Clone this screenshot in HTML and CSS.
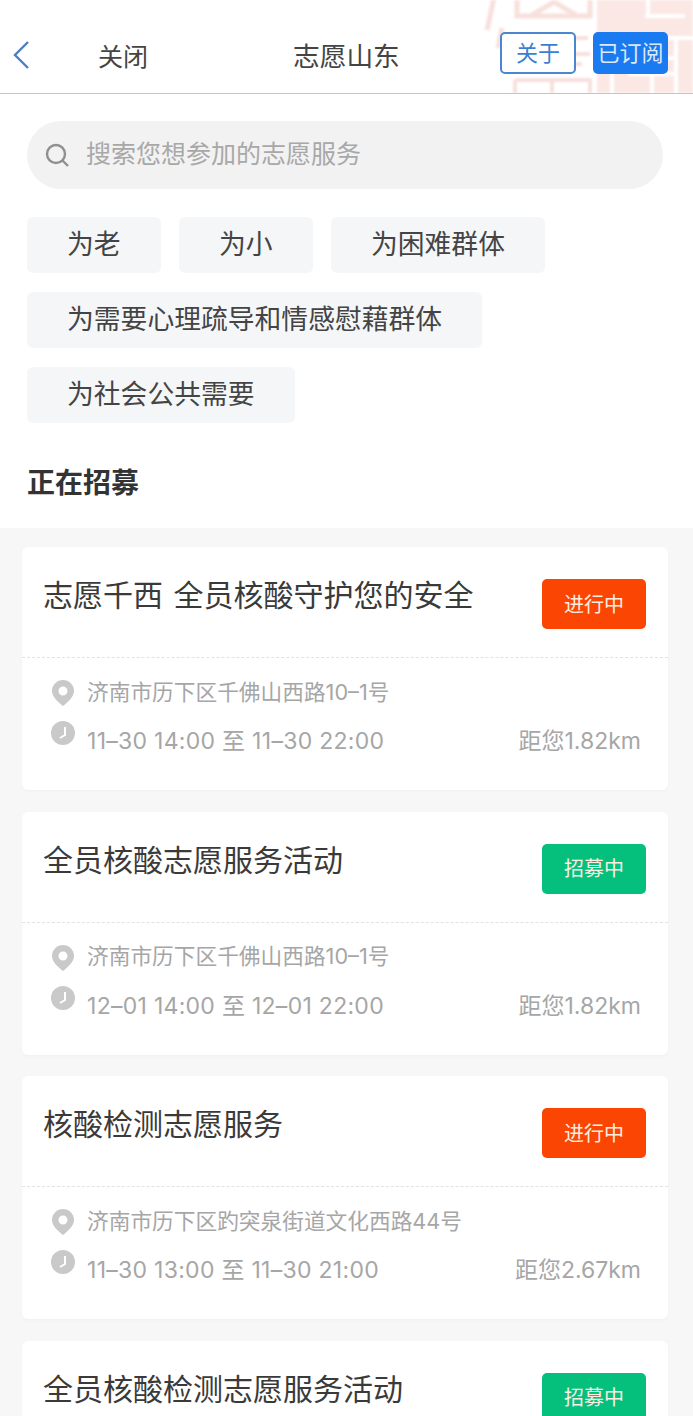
FILE: index.html
```html
<!DOCTYPE html>
<html lang="zh-CN">
<head>
    <meta charset="UTF-8">
    <meta name="viewport" content="width=device-width, initial-scale=1.0">
    <title>志愿山东</title>
    <link rel="stylesheet" href="styles.css">
</head>
<body>
    <header class="nav-bar">
        <svg class="nav-deco" width="213" height="93" viewBox="0 0 213 93" fill="none" stroke="#f8e0dc" stroke-width="5">
            <path d="M14 -2 L7 30 M22 28 L18 48 M37 -2 V16 H110 V-2 M52 15 L74 2 L96 15"/>
            <rect x="117" y="-4" width="96" height="100" fill="#fbe8e5" stroke="none"/>
            <path d="M32 38 H108 M30 54 H110 M36 64 H102 M35 80 H110 V96 M35 80 V96 M72 80 V96" stroke-width="4"/>
            <path d="M165 16 H205 M168 -2 V18 M128 38 H213 M132 38 V96 M148 58 H196 M148 74 H196 M172 42 V96 M196 38 V96" stroke="#fff" stroke-width="4"/>
        </svg>
        <svg class="back-icon" width="20" height="32" viewBox="0 0 20 32" fill="none" stroke="#4a7fc4" stroke-width="2.4">
            <path d="M17 3 L4 16 L17 29"/>
        </svg>
        <span class="nav-close">关闭</span>
        <span class="nav-title">志愿山东</span>
        <div class="nav-actions">
            <span class="btn-about">关于</span>
            <span class="btn-sub">已订阅</span>
        </div>
    </header>

    <section class="top-section">
        <div class="search-box">
            <svg width="26" height="26" viewBox="0 0 26 26" fill="none" stroke="#8f8f8f" stroke-width="2.4">
                <circle cx="12" cy="12" r="9"/>
                <path d="M18.5 18.5 L24 24"/>
            </svg>
            <span class="search-text">搜索您想参加的志愿服务</span>
        </div>
        <div class="tags-container">
            <span class="tag">为老</span>
            <span class="tag">为小</span>
            <span class="tag">为困难群体</span>
            <span class="tag">为需要心理疏导和情感慰藉群体</span>
            <span class="tag">为社会公共需要</span>
        </div>
        <h2 class="section-title">正在招募</h2>
    </section>

    <main class="card-list">
        <article class="card">
            <div class="card-head">
                <h3 class="card-title">志愿千西 全员核酸守护您的安全</h3>
                <span class="status status-going">进行中</span>
            </div>
            <div class="card-body">
                <div class="info-row info-addr">
                    <svg class="pin-icon" viewBox="0 0 24 28"><path fill-rule="evenodd" d="M12 1a11 11 0 0 1 11 11c0 6-6 11-11 15C7 23 1 18 1 12A11 11 0 0 1 12 1zm0 6.500a4.500 4.500 0 1 0 0 9 4.500 4.500 0 0 0 0-9z"/></svg>
                    <span>济南市历下区千佛山西路10–1号</span>
                </div>
                <div class="info-row info-time">
                    <svg class="clock-icon" viewBox="0 0 24 24"><circle cx="12" cy="12" r="12"/><path d="M14 6 V14 L9 17" fill="none" stroke="#fff" stroke-width="2"/></svg>
                    <span class="time-text">11–30 14:00 至 11–30 22:00</span>
                    <span class="distance">距您1.82km</span>
                </div>
            </div>
        </article>

        <article class="card">
            <div class="card-head">
                <h3 class="card-title">全员核酸志愿服务活动</h3>
                <span class="status status-open">招募中</span>
            </div>
            <div class="card-body">
                <div class="info-row info-addr">
                    <svg class="pin-icon" viewBox="0 0 24 28"><path fill-rule="evenodd" d="M12 1a11 11 0 0 1 11 11c0 6-6 11-11 15C7 23 1 18 1 12A11 11 0 0 1 12 1zm0 6.500a4.500 4.500 0 1 0 0 9 4.500 4.500 0 0 0 0-9z"/></svg>
                    <span>济南市历下区千佛山西路10–1号</span>
                </div>
                <div class="info-row info-time">
                    <svg class="clock-icon" viewBox="0 0 24 24"><circle cx="12" cy="12" r="12"/><path d="M14 6 V14 L9 17" fill="none" stroke="#fff" stroke-width="2"/></svg>
                    <span class="time-text">12–01 14:00 至 12–01 22:00</span>
                    <span class="distance">距您1.82km</span>
                </div>
            </div>
        </article>

        <article class="card">
            <div class="card-head">
                <h3 class="card-title">核酸检测志愿服务</h3>
                <span class="status status-going">进行中</span>
            </div>
            <div class="card-body">
                <div class="info-row info-addr">
                    <svg class="pin-icon" viewBox="0 0 24 28"><path fill-rule="evenodd" d="M12 1a11 11 0 0 1 11 11c0 6-6 11-11 15C7 23 1 18 1 12A11 11 0 0 1 12 1zm0 6.500a4.500 4.500 0 1 0 0 9 4.500 4.500 0 0 0 0-9z"/></svg>
                    <span>济南市历下区趵突泉街道文化西路44号</span>
                </div>
                <div class="info-row info-time">
                    <svg class="clock-icon" viewBox="0 0 24 24"><circle cx="12" cy="12" r="12"/><path d="M14 6 V14 L9 17" fill="none" stroke="#fff" stroke-width="2"/></svg>
                    <span class="time-text">11–30 13:00 至 11–30 21:00</span>
                    <span class="distance">距您2.67km</span>
                </div>
            </div>
        </article>

        <article class="card">
            <div class="card-head">
                <h3 class="card-title">全员核酸检测志愿服务活动</h3>
                <span class="status status-open">招募中</span>
            </div>
        </article>
    </main>
</body>
</html>
```

FILE: styles.css
```css
body {
    font-family: "Inter", "Noto Sans CJK SC", sans-serif;
    margin: 0;
    background-color: #fff;
    color: #333;
}

/* Nav */
.nav-bar {
    position: relative;
    display: flex;
    align-items: center;
    height: 94px;
    padding-top: 16px;
    box-sizing: border-box;
    border-bottom: 1px solid #c4c4c4;
    overflow: hidden;
}
.nav-deco {
    position: absolute;
    top: 0;
    right: 0;
    filter: blur(1px);
}
.back-icon {
    position: relative;
    margin-left: 11px;
    flex: none;
}
.nav-close {
    position: relative;
    margin-left: 67px;
    font-size: 25px;
    color: #444;
}
.nav-title {
    position: relative;
    margin-left: 145px;
    font-size: 26.700px;
    color: #444;
}
.nav-actions {
    position: relative;
    display: flex;
    gap: 17px;
    margin-left: auto;
    margin-right: 25px;
    margin-top: -4px;
}
.btn-about, .btn-sub {
    display: flex;
    align-items: center;
    justify-content: center;
    height: 42px;
    padding-bottom: 3px;
    box-sizing: border-box;
    border-radius: 5px;
    font-size: 22px;
}
.btn-about {
    width: 76px;
    border: 2px solid #4a87d0;
    background-color: #fff;
    color: #3a7fd4;
}
.btn-sub {
    width: 75px;
    background-color: #1a7af0;
    color: #dbe9fb;
}

/* Search and tags */
.top-section {
    padding: 27px 27px 0;
    height: 434px;
    box-sizing: border-box;
}
.search-box {
    display: flex;
    align-items: center;
    gap: 16px;
    height: 68px;
    margin-right: 3px;
    padding-left: 17px;
    border-radius: 34px;
    background-color: #f2f2f2;
    font-size: 25px;
    color: #a8a8a8;
}
.search-text {
    padding-bottom: 6px;
}
.tags-container {
    display: flex;
    flex-wrap: wrap;
    gap: 19px 18.400px;
    margin-top: 28px;
    width: 560px;
}
.tag {
    display: flex;
    align-items: center;
    height: 56px;
    padding: 0 40px 6px;
    box-sizing: border-box;
    border-radius: 6px;
    background-color: #f5f6f8;
    font-size: 26.800px;
    color: #444;
}
.section-title {
    margin: 40px 0 0;
    font-size: 28px;
    font-weight: bold;
    line-height: 40px;
    color: #333;
}

/* Cards */
.card-list {
    height: 888px;
    overflow: hidden;
    box-sizing: border-box;
    padding: 19px 25px 0 22px;
    background-color: #f7f7f7;
    display: flex;
    flex-direction: column;
    gap: 21.500px;
}
.card {
    background-color: #fff;
    border-radius: 6px;
    height: 243px;
    box-sizing: border-box;
    flex: none;
    box-shadow: 0 1px 3px rgba(0,0,0,0.03);
}
.card-head {
    display: flex;
    justify-content: space-between;
    align-items: flex-start;
    height: 111px;
    padding: 32px 22px 0 22px;
    box-sizing: border-box;
    border-bottom: 1px dashed #e2e2e2;
}
.card-title {
    margin: -6px 0 0 -1px;
    font-size: 30px;
    font-weight: normal;
    line-height: 44px;
    word-spacing: 2px;
    color: #3a3a3a;
}
.status {
    display: flex;
    align-items: center;
    justify-content: center;
    width: 104px;
    height: 50px;
    padding-bottom: 2px;
    box-sizing: border-box;
    border-radius: 5px;
    font-size: 20px;
    color: #fbeee0;
}
.status-going {
    background-color: #fb4503;
}
.status-open {
    background-color: #05c07d;
}
.card-body {
    padding: 14px 27px 0 29px;
}
.info-row {
    display: flex;
    align-items: center;
    color: #a6a6a6;
}
.info-addr {
    font-size: 21.700px;
    height: 36px;
}
.info-addr .pin-icon {
    margin-top: 6px;
}
.info-time {
    font-size: 23px;
    height: 40px;
    margin-top: 11px;
}
.time-text {
    letter-spacing: 0.280px;
}
.pin-icon {
    width: 24px;
    height: 28px;
    margin-right: 12px;
    fill: #c9c9c9;
    flex: none;
}
.clock-icon {
    width: 24px;
    height: 24px;
    margin-right: 12px;
    margin-top: -12px;
    fill: #c9c9c9;
    flex: none;
}
.distance {
    margin-left: auto;
}
```
